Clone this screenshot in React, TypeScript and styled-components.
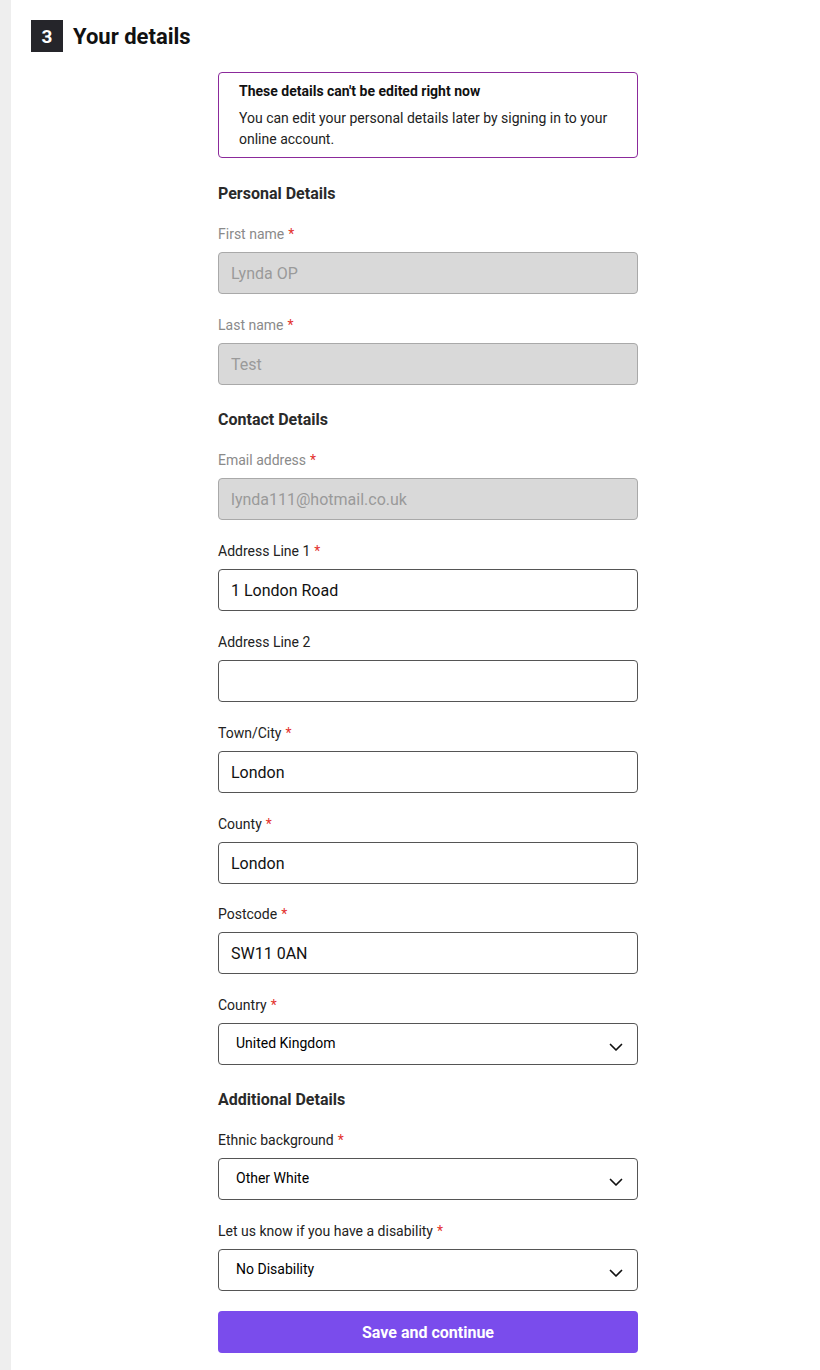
import React from "react";
import styled, { createGlobalStyle } from "styled-components";

const Global = createGlobalStyle`
  html, body { margin: 0; padding: 0; background: #ffffff; }
  body { font-family: Roboto, "Noto Sans", Arial, sans-serif; color: #222; }
  * { box-sizing: border-box; }
`;

const Page = styled.div`
  display: flex;
  min-height: 1370px;
`;

const SideRail = styled.div`
  width: 11px;
  flex: 0 0 11px;
  background: #eeeeee;
`;

const Main = styled.main`
  flex: 1;
  padding: 20px 0 0 20px;
`;

const Header = styled.div`
  display: flex;
  align-items: center;
  gap: 10px;
`;

const StepBadge = styled.span`
  width: 32px;
  height: 32px;
  background: #25252a;
  color: #fff;
  font-weight: 700;
  font-size: 19px;
  display: flex;
  align-items: center;
  justify-content: center;
`;

const Title = styled.h2`
  margin: 0;
  font-size: 22px;
  font-weight: 700;
  color: #111;
`;

const Form = styled.form`
  width: 420px;
  margin: 20px 0 0 187px;
  display: flex;
  flex-direction: column;
`;

const Notice = styled.div`
  border: 1px solid #8b2a9b;
  border-radius: 4px;
  padding: 9px 20px 7px 20px;
  margin-bottom: 24px;
`;

const NoticeTitle = styled.div`
  font-size: 14px;
  font-weight: 700;
  color: #111;
  line-height: 18px;
  margin-bottom: 8px;
`;

const NoticeBody = styled.div`
  font-size: 14px;
  line-height: 21px;
  color: #222;
`;

const SectionHeading = styled.h3`
  margin: 0 0 18px 0;
  font-size: 16px;
  line-height: 24px;
  font-weight: 700;
  color: #2a2a2a;
`;

const Field = styled.div<{ $after?: number }>`
  display: flex;
  flex-direction: column;
  gap: 8px;
  margin-bottom: ${(p) => p.$after ?? 21}px;
`;

const Label = styled.label<{ $disabled?: boolean }>`
  font-size: 14px;
  line-height: 20px;
  color: ${(p) => (p.$disabled ? "#8a8a8a" : "#222")};
`;

const Req = styled.span`
  color: #e3312d;
  margin-left: 4px;
`;

const TextInput = styled.input`
  height: 42px;
  width: 100%;
  border: 1px solid ${(p) => (p.disabled ? "#a9a9a9" : "#555")};
  border-radius: 4px;
  background: ${(p) => (p.disabled ? "#d9d9d9" : "#fff")};
  color: ${(p) => (p.disabled ? "#9a9a9a" : "#111")};
  font-family: Roboto, "Noto Sans", Arial, sans-serif;
  font-size: 16px;
  padding: 0 12px;
  outline: none;
`;

const SelectBox = styled.div`
  height: 42px;
  width: 100%;
  border: 1px solid #555;
  border-radius: 4px;
  background: #fff;
  display: flex;
  align-items: center;
  justify-content: space-between;
  padding: 0 14px 0 17px;
`;

const SelectValue = styled.span`
  font-size: 14px;
  color: #000;
  margin-top: -3px;
`;

const Chevron = styled.svg`
  width: 14px;
  height: 14px;
  margin-top: 5px;
`;

const SubmitButton = styled.button`
  height: 42px;
  width: 100%;
  margin-top: -1px;
  border: none;
  border-radius: 4px;
  background: #7a4cec;
  color: #fff;
  font-family: Roboto, "Noto Sans", Arial, sans-serif;
  font-size: 16px;
  font-weight: 700;
  cursor: pointer;
`;

type TextFieldProps = {
  label: string;
  value?: string;
  required?: boolean;
  disabled?: boolean;
  after?: number;
};

const TextField = ({ label, value = "", required, disabled, after }: TextFieldProps) => (
  <Field $after={after}>
    <Label $disabled={disabled}>
      {label}
      {required && <Req>*</Req>}
    </Label>
    <TextInput disabled={disabled} defaultValue={value} />
  </Field>
);

const SelectField = ({ label, value, after }: { label: string; value: string; after?: number }) => (
  <Field $after={after}>
    <Label>
      {label}
      <Req>*</Req>
    </Label>
    <SelectBox>
      <SelectValue>{value}</SelectValue>
      <Chevron viewBox="0 0 14 14" fill="none">
        <path d="M1.5 4.5 L7 10 L12.5 4.5" stroke="#111" strokeWidth="1.7" strokeLinecap="round" strokeLinejoin="round" />
      </Chevron>
    </SelectBox>
  </Field>
);

export default function App() {
  return (
    <>
      <Global />
      <Page>
        <SideRail />
        <Main>
          <Header>
            <StepBadge>3</StepBadge>
            <Title>Your details</Title>
          </Header>
          <Form onSubmit={(e) => e.preventDefault()}>
            <Notice>
              <NoticeTitle>These details can't be edited right now</NoticeTitle>
              <NoticeBody>
                You can edit your personal details later by signing in to your online account.
              </NoticeBody>
            </Notice>

            <SectionHeading>Personal Details</SectionHeading>
            <TextField label="First name" value="Lynda OP" required disabled />
            <TextField label="Last name" value="Test" required disabled after={23} />

            <SectionHeading>Contact Details</SectionHeading>
            <TextField label="Email address" value="lynda111@hotmail.co.uk" required disabled />
            <TextField label="Address Line 1" value="1 London Road" required />
            <TextField label="Address Line 2" />
            <TextField label="Town/City" value="London" required />
            <TextField label="County" value="London" required after={20} />
            <TextField label="Postcode" value="SW11 0AN" required />
            <SelectField label="Country" value="United Kingdom" after={23} />

            <SectionHeading>Additional Details</SectionHeading>
            <SelectField label="Ethnic background" value="Other White" />
            <SelectField label="Let us know if you have a disability" value="No Disability" />

            <SubmitButton type="submit">Save and continue</SubmitButton>
          </Form>
        </Main>
      </Page>
    </>
  );
}
